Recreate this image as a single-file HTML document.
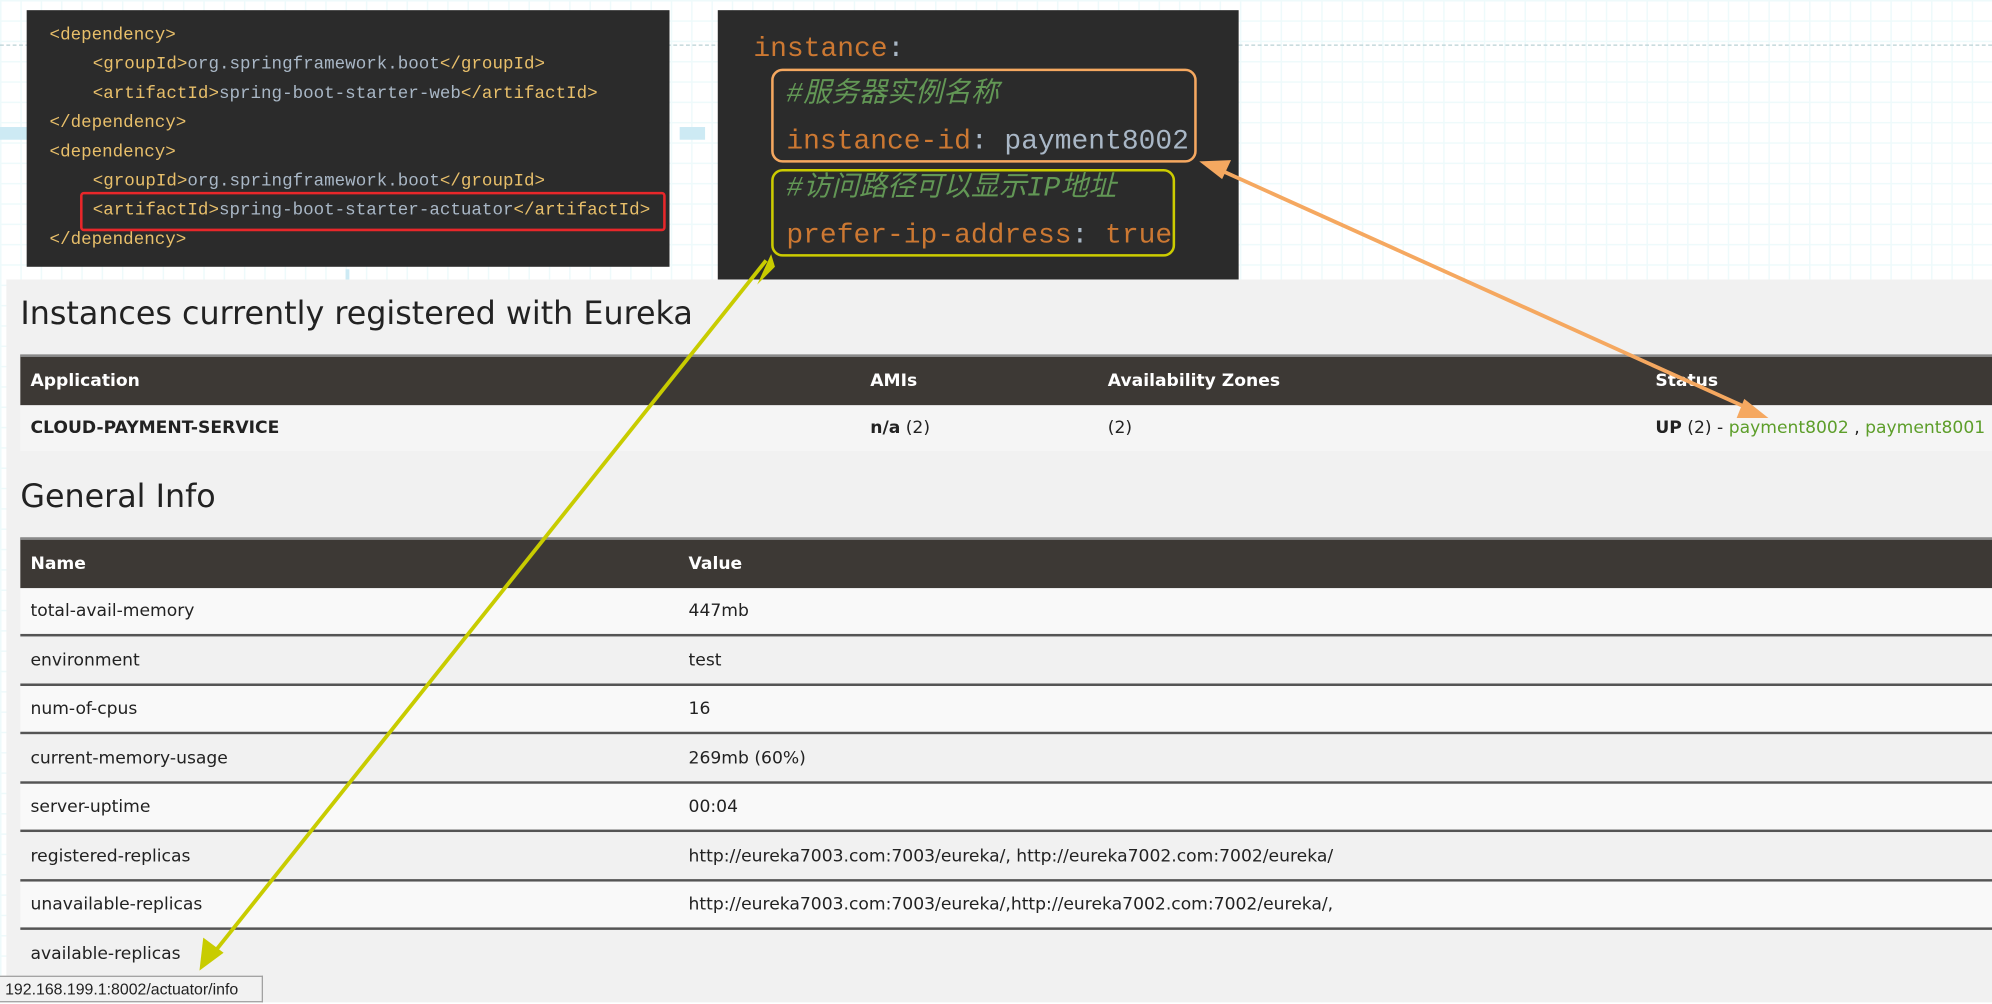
<!DOCTYPE html>
<html><head><meta charset="utf-8">
<style>
html,body{margin:0;padding:0;width:1992px;height:1002px;overflow:hidden;background:#fff}
#s{position:absolute;left:0;top:0;width:1568px;height:789px;transform:scale(1.27041);transform-origin:0 0;
background-color:#fff;
background-image:linear-gradient(#eefafb 1px,transparent 1px),linear-gradient(90deg,#eefafb 1px,transparent 1px);
background-size:16px 16px;font-family:"Liberation Sans",sans-serif}
.abs{position:absolute}
.code{background:#2b2b2b;font-family:"Liberation Mono","Noto Sans CJK SC",monospace;white-space:pre}
.l1 .ln{position:absolute;font-size:13.8px;color:#e8bf6a;line-height:16px}
.l1 .t{color:#a9b7c6}
.l2 .ln{position:absolute;font-size:22px;line-height:26px;color:#cc7832}
.l2 .cm{color:#629755;font-style:italic}
.v{color:#a9b7c6}
.gray{position:absolute;left:5px;top:220px;width:1563px;height:569px;background:#f1f1f1}
h2{position:absolute;margin:0;font-weight:normal;font-size:25px;color:#222;left:16px;font-family:"DejaVu Sans",sans-serif}
.hd{position:absolute;left:16px;width:1552px;background:#3d3935;border-top:2px solid #8a8a8a;color:#fff;font-weight:bold;font-size:13.5px;font-family:"DejaVu Sans",sans-serif}
.hd span,.row span{position:absolute;top:50%;transform:translateY(-50%)}
.row{position:absolute;left:16px;width:1552px;font-size:13.5px;color:#222;border-bottom:2px solid #555;font-family:"DejaVu Sans",sans-serif}
a{color:#5d9e2a}
</style></head><body>
<div id="s">
<div class="abs" style="left:0;top:35px;width:1568px;border-top:1px dashed #b8d0d4"></div>
<div class="abs" style="left:0;top:100px;width:22px;height:10px;background:#cdeaf4"></div>
<div class="abs" style="left:535px;top:100px;width:20px;height:10px;background:#cdeaf4"></div>
<div class="abs" style="left:272px;top:212px;width:3px;height:20px;background:#cdeaf4"></div>

<div class="abs code l1" style="left:21px;top:8px;width:506px;height:202px">
<div class="ln" style="left:18px;top:13px">&lt;dependency&gt;</div>
<div class="ln" style="left:52px;top:36px">&lt;groupId&gt;<span class="t">org.springframework.boot</span>&lt;/groupId&gt;</div>
<div class="ln" style="left:52px;top:59px">&lt;artifactId&gt;<span class="t">spring-boot-starter-web</span>&lt;/artifactId&gt;</div>
<div class="ln" style="left:18px;top:82px">&lt;/dependency&gt;</div>
<div class="ln" style="left:18px;top:105px">&lt;dependency&gt;</div>
<div class="ln" style="left:52px;top:128px">&lt;groupId&gt;<span class="t">org.springframework.boot</span>&lt;/groupId&gt;</div>
<div class="ln" style="left:52px;top:151px">&lt;artifactId&gt;<span class="t">spring-boot-starter-actuator</span>&lt;/artifactId&gt;</div>
<div class="ln" style="left:18px;top:174px">&lt;/dependency&gt;</div>
<div class="abs" style="left:42px;top:143px;width:457px;height:27px;border:2px solid #e8272a;border-radius:3px"></div>
</div>

<div class="abs code l2" style="left:565px;top:8px;width:410px;height:212px;overflow:hidden">
<div class="ln" style="left:28px;top:18px">instance<span class="v">:</span></div>
<div class="ln cm" style="left:54px;top:54px">#服务器实例名称</div>
<div class="ln" style="left:54px;top:91px">instance-id<span class="v">: payment8002</span></div>
<div class="ln cm" style="left:54px;top:128px">#访问路径可以显示IP地址</div>
<div class="ln" style="left:54px;top:165px">prefer-ip-address<span class="v">: </span>true</div>
<div class="abs" style="left:42px;top:46px;width:331px;height:70px;border:2px solid #f5a860;border-radius:9px"></div>
<div class="abs" style="left:42px;top:125px;width:314px;height:65px;border:2px solid #cccc00;border-radius:9px"></div>
</div>

<div class="gray"></div>
<h2 style="top:232px">Instances currently registered with Eureka</h2>
<div class="hd" style="top:279px;height:38px"><span style="left:8px">Application</span><span style="left:669px">AMIs</span><span style="left:856px">Availability Zones</span><span style="left:1287px">Status</span></div>
<div class="row" style="top:319px;height:36px;background:#f5f5f5;border:none"><span style="left:8px;font-weight:bold">CLOUD-PAYMENT-SERVICE</span><span style="left:669px"><b>n/a</b> (2)</span><span style="left:856px">(2)</span><span style="left:1287px;white-space:nowrap"><b>UP</b> (2) - <a>payment8002</a> , <span style="color:#5d9e2a;position:static;transform:none">payment8001</span></span></div>
<h2 style="top:376px">General Info</h2>
<div class="hd" style="top:423px;height:38px"><span style="left:8px">Name</span><span style="left:526px">Value</span></div>
<div class="row" style="top:463px;height:36px;background:#f9f9f9"><span style="left:8px">total-avail-memory</span><span style="left:526px">447mb</span></div>
<div class="row" style="top:501px;height:37px;background:#f1f1f1"><span style="left:8px">environment</span><span style="left:526px">test</span></div>
<div class="row" style="top:540px;height:36px;background:#f9f9f9"><span style="left:8px">num-of-cpus</span><span style="left:526px">16</span></div>
<div class="row" style="top:578px;height:37px;background:#f1f1f1"><span style="left:8px">current-memory-usage</span><span style="left:526px">269mb (60%)</span></div>
<div class="row" style="top:617px;height:36px;background:#f9f9f9"><span style="left:8px">server-uptime</span><span style="left:526px">00:04</span></div>
<div class="row" style="top:655px;height:37px;background:#f1f1f1"><span style="left:8px">registered-replicas</span><span style="left:526px">http://eureka7003.com:7003/eureka/, http://eureka7002.com:7002/eureka/</span></div>
<div class="row" style="top:694px;height:36px;background:#f9f9f9"><span style="left:8px">unavailable-replicas</span><span style="left:526px">http://eureka7003.com:7003/eureka/,http://eureka7002.com:7002/eureka/,</span></div>
<div class="row" style="top:732px;height:37px;background:#f1f1f1;border:none"><span style="left:8px">available-replicas</span></div>
<div class="abs" style="left:0;top:768px;width:207px;height:21px;background:#f2f2f2;border:1px solid #a0a0a0;border-left:none;font-size:12.5px;line-height:21px;color:#222;padding-left:4px;box-sizing:border-box">192.168.199.1:8002/actuator/info</div>

<svg class="abs" style="left:0;top:0" width="1568" height="789">
<line x1="603" y1="205" x2="162" y2="758" stroke="#c8cc00" stroke-width="3"/>
<polygon points="607,200 596,224 610,210" fill="#c8cc00"/>
<polygon points="157,764 160,738 176,750" fill="#c8cc00"/>
<line x1="952" y1="130" x2="1384" y2="325" stroke="#f5a860" stroke-width="3"/>
<polygon points="944,127 969,126 962,141" fill="#f5a860"/>
<polygon points="1392,329 1367,329 1373,314" fill="#f5a860"/>
</svg>
</div>
</body></html>
